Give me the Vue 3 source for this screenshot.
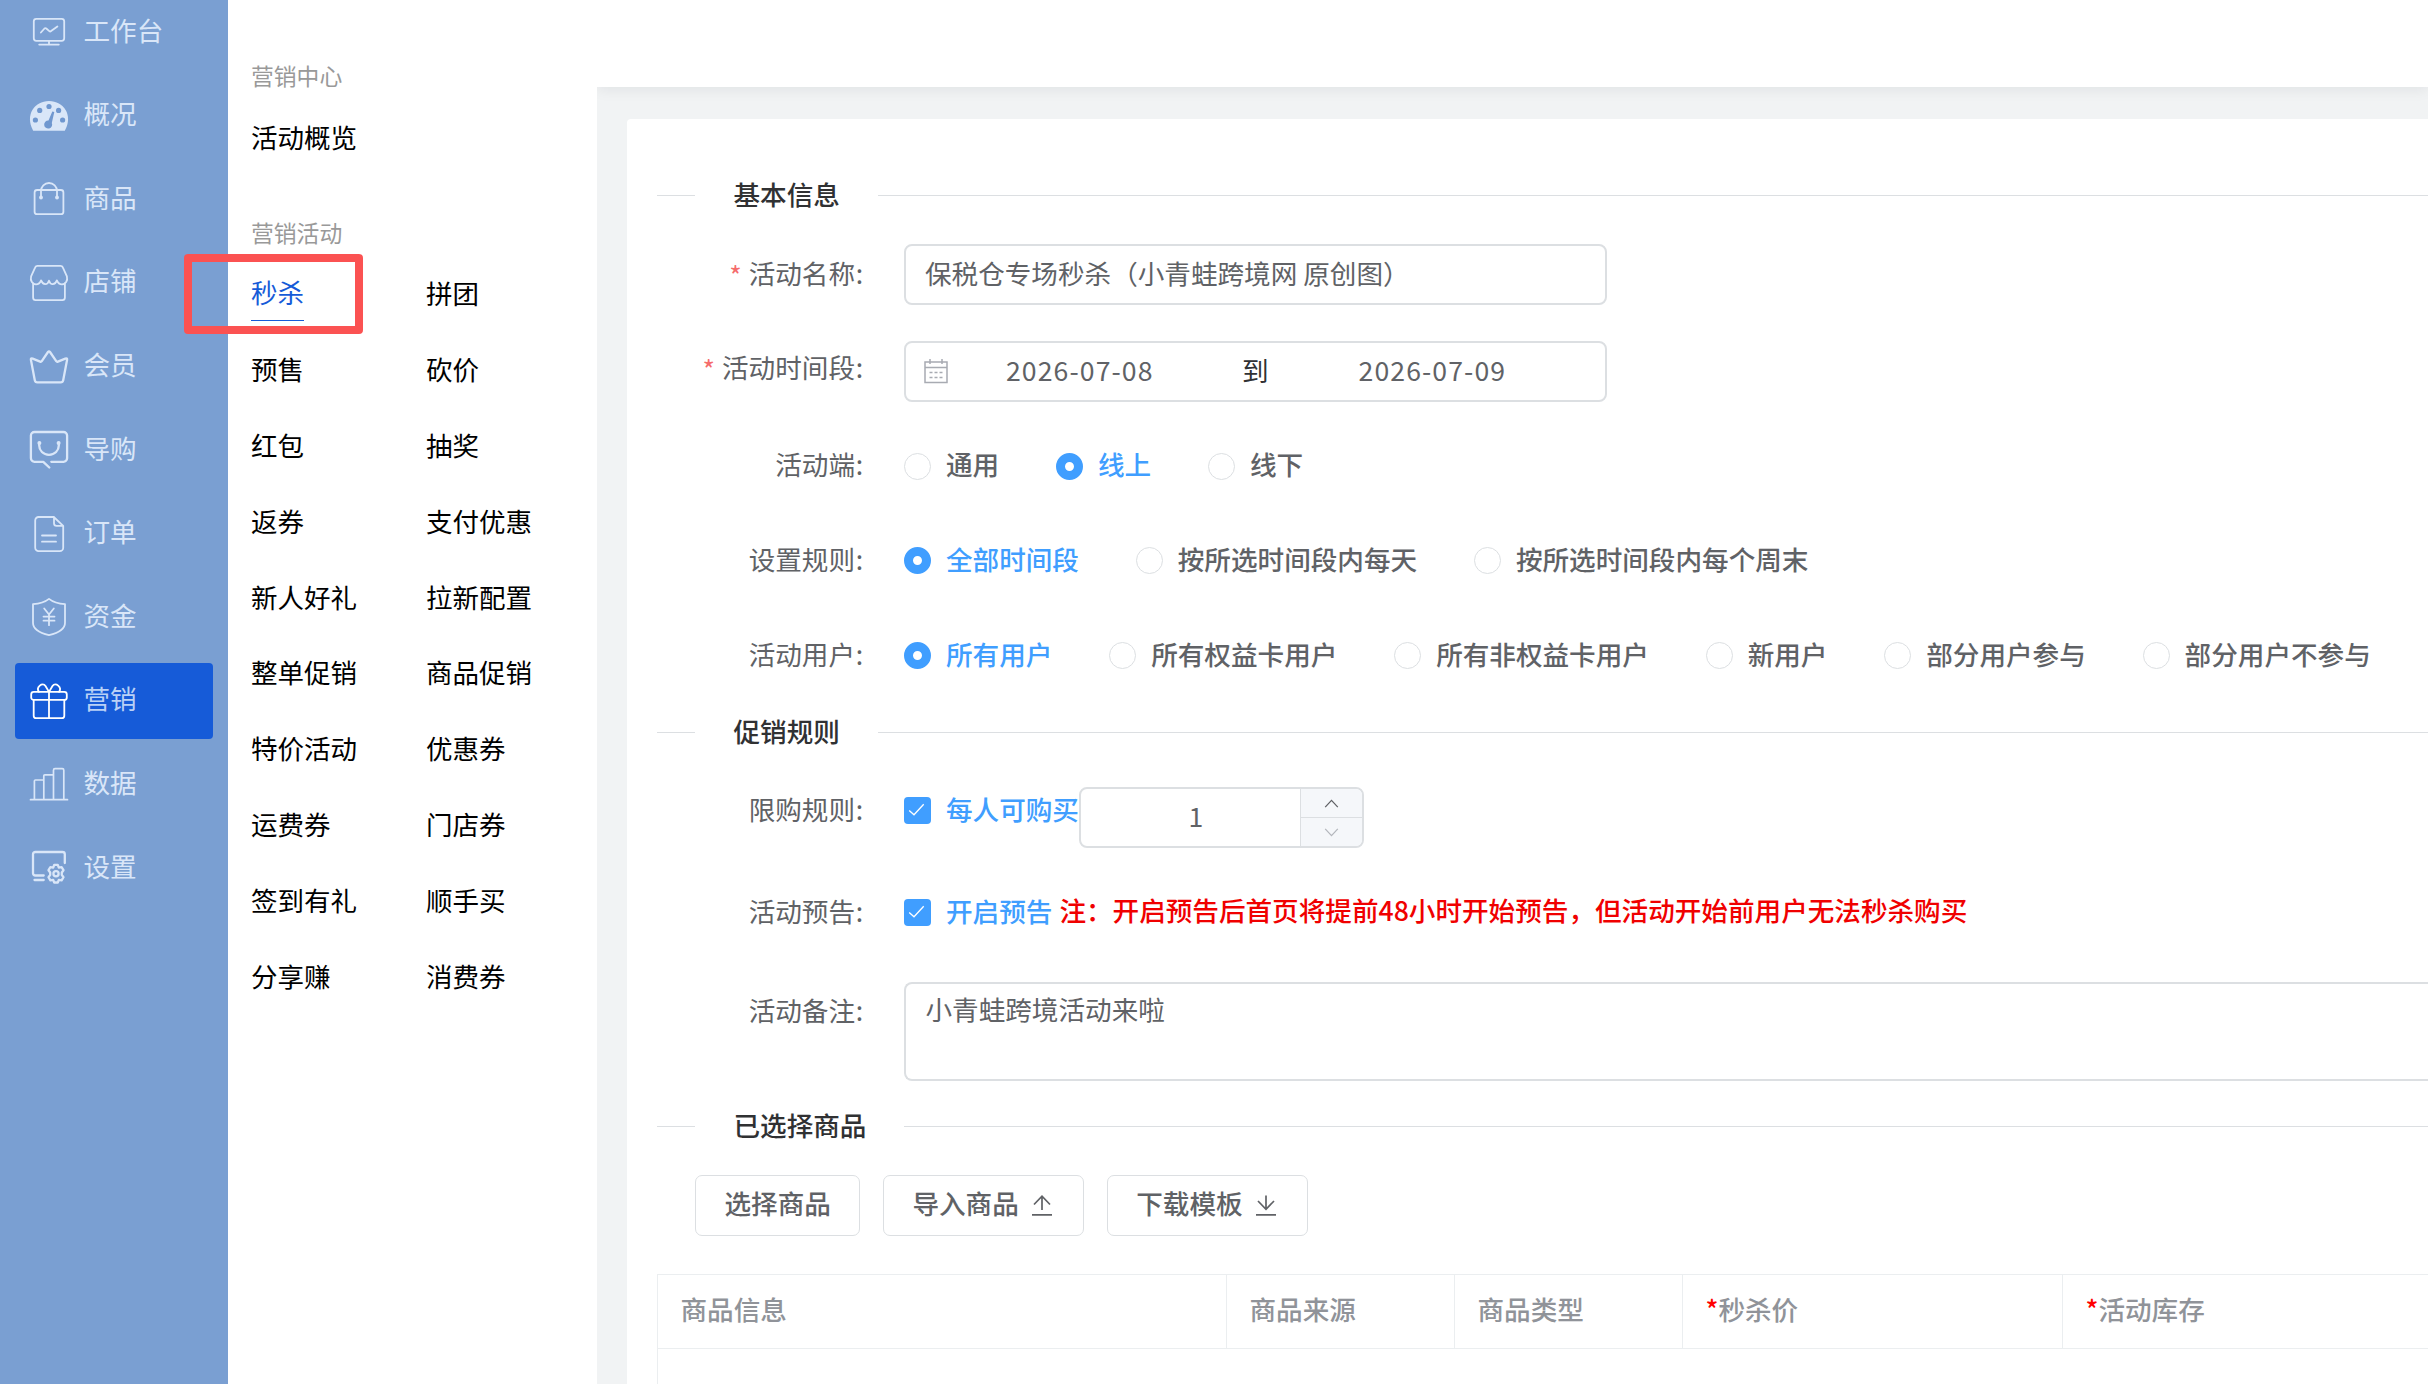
<script setup>
const navItems = [
  { key: 'desk', label: '工作台' },
  { key: 'gauge', label: '概况' },
  { key: 'bag', label: '商品' },
  { key: 'shop', label: '店铺' },
  { key: 'crown', label: '会员' },
  { key: 'guide', label: '导购' },
  { key: 'order', label: '订单' },
  { key: 'fund', label: '资金' },
  { key: 'gift', label: '营销', active: true },
  { key: 'chart', label: '数据' },
  { key: 'setting', label: '设置' },
]

const menuItems = [
  '秒杀', '拼团', '预售', '砍价', '红包', '抽奖', '返券', '支付优惠', '新人好礼', '拉新配置',
  '整单促销', '商品促销', '特价活动', '优惠券', '运费券', '门店券', '签到有礼', '顺手买', '分享赚', '消费券',
]

const radioRows = [
  { label: '活动端', options: ['通用', '线上', '线下'], checked: 1, cls: 'row-terminal' },
  { label: '设置规则', options: ['全部时间段', '按所选时间段内每天', '按所选时间段内每个周末'], checked: 0, cls: 'row-rule' },
  {
    label: '活动用户',
    options: ['所有用户', '所有权益卡用户', '所有非权益卡用户', '新用户', '部分用户参与', '部分用户不参与'],
    checked: 0,
    cls: 'row-user',
  },
]

const columns = [
  { title: '商品信息', cls: 'col-info' },
  { title: '商品来源', cls: 'col-small' },
  { title: '商品类型', cls: 'col-small' },
  { title: '秒杀价', cls: 'col-price', required: true },
  { title: '活动库存', cls: 'col-stock', required: true },
]
</script>

<template>
  <div class="page">
    <nav class="sidebar">
      <div v-for="item in navItems" :key="item.key" class="nav-item" :class="{ active: item.active }">
        <svg class="nav-icon" viewBox="0 0 38 38">
          <g v-if="item.key === 'desk'">
            <rect x="3.8" y="5.8" width="30.4" height="22" rx="2.5" />
            <path d="M10.9 19.5l3.6-4c.6-.6 1.2-.5 1.8 0l3 2.6c.6.5 1.2.5 1.8 0l6.3-4.6M19 27.8v3.6M9.2 31.6h19.6" />
          </g>
          <g v-else-if="item.key === 'gauge'">
            <path class="solid" d="M3.2 33.7C-5.500 18 4.500 4 19 4s24.500 14 15.800 29.700z" />
            <g class="hole">
              <circle cx="5.400" cy="23" r="2.600" /><circle cx="9.700" cy="13.400" r="2.600" />
              <circle cx="19" cy="9.500" r="2.600" /><circle cx="28.600" cy="13.400" r="2.600" />
              <circle cx="32.600" cy="23" r="2.600" />
              <path d="M22.300 14.500l2 .4-2.500 11a4 4 0 1 1-3.300-2.300z" />
            </g>
          </g>
          <g v-else-if="item.key === 'bag'">
            <rect x="4.600" y="10" width="28.800" height="24.200" rx="2.500" />
            <path d="M11 17.500V11a8 8 0 0 1 16 0v6.500" />
            <circle class="solid" cx="11" cy="17.500" r="1.900" /><circle class="solid" cx="27" cy="17.500" r="1.900" />
          </g>
          <g v-else-if="item.key === 'shop'">
            <path d="M7.500 1.900h23c1.200 0 1.900.5 2.300 1.500l4.100 9c1.200 4.500-1.500 8-5 8-2.500 0-4-1.500-5-4-1.800 4.800-6.500 4.800-7.900.3-1.400 4.500-6.100 4.500-7.900-.3-1 2.500-2.500 4-5 4-3.500 0-6.200-3.500-5-8l4.100-9c.4-1 1.100-1.500 2.300-1.500z" />
            <path d="M3.100 19.500v14c0 1.800.8 2.700 2.500 2.700h26.800c1.700 0 2.500-.9 2.500-2.700v-14" />
          </g>
          <g v-else-if="item.key === 'crown'" class="bold">
            <path d="M18 4q1-1.300 2 0l6.200 9.200c.5.700 1 .7 1.700.4l7.400-3c1.400-.5 2 0 1.800 1.200l-3.900 20.400c-.3 1.500-1 2.100-2.500 2.100H7.300c-1.500 0-2.200-.6-2.500-2.100L.9 11.800c-.2-1.200.4-1.700 1.800-1.200l7.400 3c.7.3 1.200.3 1.700-.4z" />
          </g>
          <g v-else-if="item.key === 'guide'" class="bold">
            <path d="M21.300 30.800h12.200a3.600 3.600 0 0 0 3.600-3.600V4.600A3.600 3.600 0 0 0 33.500 1h-29A3.600 3.600 0 0 0 .9 4.600v22.600a3.600 3.600 0 0 0 3.600 3.600h8.800l6 5.700" />
            <path d="M9.200 12v2.500c0 5 4 9.300 9.800 9.300s9.800-4.300 9.800-9.300V12" />
            <circle class="solid" cx="9.400" cy="12" r="2" /><circle class="solid" cx="28.600" cy="12" r="2" />
          </g>
          <g v-else-if="item.key === 'order'">
            <path d="M8.600 2h15.200l9.400 8.800v22a3.400 3.400 0 0 1-3.400 3.400H8.600a3.400 3.400 0 0 1-3.400-3.400V5.400A3.400 3.400 0 0 1 8.600 2zM24 2v6.200c0 1.800.8 2.600 2.600 2.600h6.400M12 20.500h14M12 26.700h14" />
          </g>
          <g v-else-if="item.key === 'fund'">
            <path d="M19 .9c4 3.200 9.500 4.900 16 5.300v18.600c0 6-6 10-16 12.300-10-2.300-16-6.300-16-12.300V6.200c6.500-.4 12-2.100 16-5.300z" />
            <path d="M14.200 10.500l4.800 6 4.800-6M19 16.500v10.700M13.500 18.600h11M13.500 22.700h11" />
          </g>
          <g v-else-if="item.key === 'gift'">
            <rect x="1.200" y="9.900" width="35.600" height="8" rx="2.500" />
            <path d="M3.700 17.900v15.800q0 2.500 2.500 2.500h25.600q2.500 0 2.500-2.500V17.900M19 9.900v26.300M9 9.900C5.500 5.500 12.500-.5 15.500 4L19 9.900 22.500 4C25.500-.5 32.500 5.500 29 9.900" />
          </g>
          <g v-else-if="item.key === 'chart'" class="light">
            <path d="M.5 33.700h37M4.400 33.700V15q0-1 1-1h8.200M13.800 33.700V9.800q0-1 1-1h8.400M23.500 33.700V4.200q0-1.500 1.500-1.500h7.300q1.500 0 1.500 1.500v29.500" />
          </g>
          <g v-else class="bold">
            <path d="M13.700 26.500H5.300a2.300 2.300 0 0 1-2.300-2.300V5.300A2.300 2.300 0 0 1 5.300 3h27.200a2.300 2.300 0 0 1 2.300 2.300V14M4.500 31h9.200" />
            <path d="M24.200 15.900h3.600l1 2.700 2.800-.5 1.900 3.100-1.700 2.300v2.400l1.700 2.300-1.900 3.100-2.800-.5-1 2.700h-3.600l-1-2.700-2.800.5-1.900-3.100 1.700-2.300v-2.400l-1.700-2.300 1.900-3.100 2.800.5z" />
            <circle cx="26" cy="24.700" r="2.600" />
          </g>
        </svg>
        <span class="nav-label">{{ item.label }}</span>
      </div>
    </nav>

    <aside class="submenu">
      <div class="group-title">营销中心</div>
      <div class="overview">活动概览</div>
      <div class="group-title second">营销活动</div>
      <div class="menu-grid">
        <div v-for="(name, i) in menuItems" :key="name" class="menu-cell">
          <span class="menu-link" :class="{ current: i === 0 }">{{ name }}</span>
        </div>
      </div>
      <div class="callout"></div>
    </aside>

    <div class="content">
      <header class="topbar"></header>
      <main class="card">
        <div class="divider"><span class="divider-text">基本信息</span></div>

        <div class="row row-name">
          <div class="label"><i class="star">*</i>活动名称<span class="colon">:</span></div>
          <div class="input">保税仓专场秒杀（小青蛙跨境网 原创图）</div>
        </div>

        <div class="row row-range">
          <div class="label lifted"><i class="star">*</i>活动时间段<span class="colon">:</span></div>
          <div class="input range">
            <svg class="calendar" viewBox="0 0 24 26">
              <path d="M1 4h22v20.500H1zM1 9.500h22M6 1v5M18 1v5M5.500 14.500h3M10.500 14.500h3M15.500 14.500h3M5.500 19.500h3M10.500 19.500h3M15.500 19.500h3" />
            </svg>
            <span class="date">2026-07-08</span>
            <span class="to">到</span>
            <span class="date">2026-07-09</span>
          </div>
        </div>

        <div v-for="row in radioRows" :key="row.label" class="row" :class="row.cls">
          <div class="label">{{ row.label }}<span class="colon">:</span></div>
          <div class="radios">
            <label v-for="(opt, i) in row.options" :key="opt" class="radio" :class="{ checked: i === row.checked }">
              <span class="dot"></span><span>{{ opt }}</span>
            </label>
          </div>
        </div>

        <div class="divider divider-promo"><span class="divider-text">促销规则</span></div>

        <div class="row row-limit">
          <div class="label">限购规则<span class="colon">:</span></div>
          <label class="check">
            <span class="box"><svg viewBox="0 0 27 27"><path d="M5.200 13.500l4.800 4.300 9.700-10.500" /></svg></span>
            <span>每人可购买</span>
          </label>
          <div class="number">
            <span class="number-value">1</span>
            <div class="number-btns">
              <span class="up"><svg viewBox="0 0 16 10"><path d="M1 9l7-7.500L15 9" /></svg></span>
              <span class="down"><svg viewBox="0 0 16 10"><path d="M1 1l7 7.500L15 1" /></svg></span>
            </div>
          </div>
        </div>

        <div class="row row-notice">
          <div class="label">活动预告<span class="colon">:</span></div>
          <label class="check">
            <span class="box"><svg viewBox="0 0 27 27"><path d="M5.200 13.500l4.800 4.300 9.700-10.500" /></svg></span>
            <span>开启预告</span>
          </label>
          <span class="notice">注：开启预告后首页将提前48小时开始预告，但活动开始前用户无法秒杀购买</span>
        </div>

        <div class="row row-remark">
          <div class="label">活动备注<span class="colon">:</span></div>
          <div class="textarea">小青蛙跨境活动来啦</div>
        </div>

        <div class="divider divider-goods"><span class="divider-text">已选择商品</span></div>

        <div class="buttons">
          <button class="btn">选择商品</button>
          <button class="btn">导入商品<svg viewBox="0 0 20 21"><path d="M10 15V1.500M2 9.500l8-8.300 8 8.300M0 19.800h20" /></svg></button>
          <button class="btn">下载模板<svg viewBox="0 0 20 21"><path d="M10 .5V14M2 6l8 8.300L18 6M0 19.800h20" /></svg></button>
        </div>

        <div class="table">
          <div class="thead">
            <div v-for="col in columns" :key="col.title" class="th" :class="col.cls">
              <i v-if="col.required" class="req">*</i>{{ col.title }}
            </div>
          </div>
        </div>
      </main>
    </div>
  </div>
</template>

<style>
html,
body {
  margin: 0;
  overflow: hidden;
}
</style>

<style scoped>
.page {
  display: flex;
  width: 2428px;
  height: 1384px;
  overflow: hidden;
  background: #fff;
  font-family: "Noto Sans CJK SC", "Noto Sans", sans-serif;
  font-size: 26.6px;
  line-height: 40px;
  color: #606266;
  white-space: nowrap;
}
i {
  font-style: normal;
}

/* primary navigation */
.sidebar {
  flex: none;
  width: 228px;
  box-sizing: border-box;
  padding: 0 15px;
  background: #7a9fd2;
}
.nav-item {
  display: flex;
  align-items: center;
  height: 76px;
  margin-bottom: 7.6px;
  padding-left: 15px;
  border-radius: 4px;
  color: #d9e6f8;
}
.nav-item:first-child {
  margin-top: -5.8px;
}
.nav-item.active {
  background: #165bd8;
  color: #b9d1f6;
}
.nav-icon {
  width: 38px;
  height: 38px;
  overflow: visible;
  fill: none;
  stroke: #d9e6f8;
  stroke-width: 1.8;
  stroke-linecap: round;
  stroke-linejoin: round;
}
.active .nav-icon {
  stroke: #fff;
}
.nav-icon .bold {
  stroke-width: 2.3;
}
.nav-icon .light {
  stroke-width: 1.7;
}
.nav-icon .solid {
  fill: #d9e6f8;
  stroke: none;
}
.nav-icon .hole {
  fill: #6f97cf;
  stroke: none;
}
.nav-label {
  margin: -5px 0 0 15.500px;
}

/* secondary menu */
.submenu {
  position: relative;
  flex: none;
  width: 369px;
  box-sizing: border-box;
  padding: 56px 0 0 23px;
  background: #fff;
  color: #000;
  font-size: 26.5px;
}
.group-title {
  font-size: 22.8px;
  color: #999;
}
.overview {
  margin-top: 21px;
}
.group-title.second {
  margin-top: 55.500px;
}
.menu-grid {
  display: grid;
  grid-template-columns: 175px 1fr;
  grid-auto-rows: 75.9px;
  margin-top: 2.500px;
}
.menu-cell {
  display: flex;
  align-items: center;
}
.menu-link.current {
  color: #165bd8;
  height: 56px;
  line-height: 53px;
  box-sizing: border-box;
  border-bottom: 1px solid #165bd8;
}
.callout {
  position: absolute;
  left: -44px;
  top: 254px;
  width: 179px;
  height: 80px;
  box-sizing: border-box;
  border: 8px solid #fb5252;
  border-radius: 4px;
}

/* content area */
.content {
  flex: 1;
  min-width: 0;
  display: flex;
  flex-direction: column;
  background: #f1f3f4;
}
.topbar {
  flex: none;
  height: 87px;
  background: #fff;
  box-shadow: 0 2px 14px rgba(0, 21, 41, 0.08);
}
.card {
  flex: 1;
  margin: 32px 0 0 30px;
  padding: 56px 0 0 30px;
  background: #fff;
  border-radius: 4px 0 0 0;
}
.divider {
  display: flex;
  align-items: center;
  height: 40px;
  color: #303133;
  font-weight: 500;
}
.divider::before {
  content: "";
  width: 38px;
  height: 1px;
  background: #dcdfe2;
}
.divider::after {
  content: "";
  flex: 1;
  height: 1px;
  background: #dcdfe2;
}
.divider-text {
  position: relative;
  top: -1.500px;
  margin: 0 38px 0 38.500px;
}
.row {
  display: flex;
  height: 61px;
  align-items: center;
}
.row-name { margin-top: 29px; }
.row-range { margin-top: 36px; }
.row-terminal { margin-top: 33.500px; }
.row-rule { margin-top: 33.500px; }
.row-user { margin-top: 34px; }
.divider-promo { margin-top: 26px; }
.row-limit { margin-top: 28px; }
.row-notice { margin-top: 41px; }
.row-remark { margin-top: 38px; align-items: flex-start; }
.divider-goods { margin-top: 64px; }

.label {
  flex: none;
  width: 207px;
  margin-right: 40px;
  display: flex;
  justify-content: flex-end;
  position: relative;
  top: -2px;
}
.label.lifted {
  top: -4.500px;
}
.row-remark .label {
  margin-top: 11px;
}
.colon {
  width: 9px;
  text-align: center;
}
.star {
  position: relative;
  top: 2px;
  margin-right: 7px;
  color: #f56c6c;
}
.input {
  width: 703px;
  height: 61px;
  box-sizing: border-box;
  padding: 0 19px;
  border: 2px solid #dcdfe2;
  border-radius: 8px;
  line-height: 53px;
}
.range {
  display: flex;
  align-items: center;
}
.calendar {
  width: 24px;
  height: 26px;
  margin: -1px 1px 0 -1px;
  fill: none;
  stroke: #a8abb2;
  stroke-width: 1.500;
}
.date,
.to {
  position: relative;
  top: -2.500px;
}
.date {
  width: 146px;
  margin-left: 57px;
  letter-spacing: 1.1px;
}
.to {
  margin: 0 -24px 0 90px;
  padding-right: 57px;
  color: #303133;
}

.radios {
  display: flex;
  gap: 56.8px;
}
.radio,
.check {
  display: flex;
  align-items: center;
  gap: 15px;
  font-weight: 500;
}
.radio > span:last-child,
.check > span:last-child {
  position: relative;
  top: -2px;
}
.dot {
  width: 27px;
  height: 27px;
  box-sizing: border-box;
  border: 1px solid #dcdfe2;
  border-radius: 50%;
}
.checked {
  color: #409eff;
}
.checked .dot {
  border: 9.500px solid #409eff;
}
.check {
  color: #409eff;
}
.box {
  width: 27px;
  height: 27px;
  border-radius: 4px;
  background: #409eff;
}
.box svg {
  display: block;
  fill: none;
  stroke: #fff;
  stroke-width: 1.300;
}
.number {
  display: flex;
  width: 285px;
  height: 61px;
  box-sizing: border-box;
  position: relative;
  top: 7px;
  border: 2px solid #dcdfe2;
  border-radius: 8px;
  overflow: hidden;
}
.number-value {
  flex: 1;
  padding-left: 11px;
  line-height: 53px;
  text-align: center;
}
.number-btns {
  display: flex;
  flex-direction: column;
  width: 61px;
  border-left: 1px solid #dcdfe2;
  background: #f5f7fa;
}
.number-btns span {
  display: flex;
  flex: 1;
  align-items: center;
  justify-content: center;
}
.number-btns .up {
  border-bottom: 1px solid #dcdfe2;
}
.number-btns svg {
  width: 15px;
  height: 9px;
  fill: none;
  stroke: #606266;
  stroke-width: 1.400;
}
.number-btns .down svg {
  stroke: #b4b7bd;
}
.notice {
  margin-left: 7px;
  color: #f00000;
  font-weight: 500;
  position: relative;
  top: -2.500px;
}
.textarea {
  flex: 1;
  height: 99px;
  box-sizing: border-box;
  margin-top: 1px;
  padding: 5px 19.500px;
  border: 2px solid #dcdfe2;
  border-right: none;
  border-radius: 8px 0 0 8px;
}

.buttons {
  display: flex;
  gap: 23px;
  margin: 29px 0 0 38px;
}
.btn {
  display: flex;
  align-items: center;
  height: 61px;
  box-sizing: border-box;
  padding: 0 28.500px 6px;
  border: 1px solid #dcdfe2;
  border-radius: 7px;
  background: #fff;
  color: #606266;
  font: inherit;
  font-weight: 500;
}
.btn svg {
  width: 20px;
  height: 21px;
  margin: 5px 0 0 13.500px;
  fill: none;
  stroke: #606266;
  stroke-width: 1.700;
}
.btn:nth-child(n + 2) {
  padding-left: 28px;
  padding-right: 31px;
}

.table {
  height: 140px;
  margin-top: 38px;
  border-top: 1px solid #ebeef0;
  border-left: 1px solid #ebeef0;
}
.thead {
  display: flex;
  height: 73px;
  border-bottom: 1px solid #ebeef0;
}
.th {
  flex: none;
  box-sizing: border-box;
  padding-left: 22.500px;
  border-right: 1px solid #ebeef0;
  line-height: 68px;
  color: #909399;
  font-weight: 500;
}
.col-info { width: 569px; }
.col-small { width: 228px; }
.col-price { width: 380px; }
.col-stock { width: 380px; }
.req {
  color: #f00;
}
</style>
